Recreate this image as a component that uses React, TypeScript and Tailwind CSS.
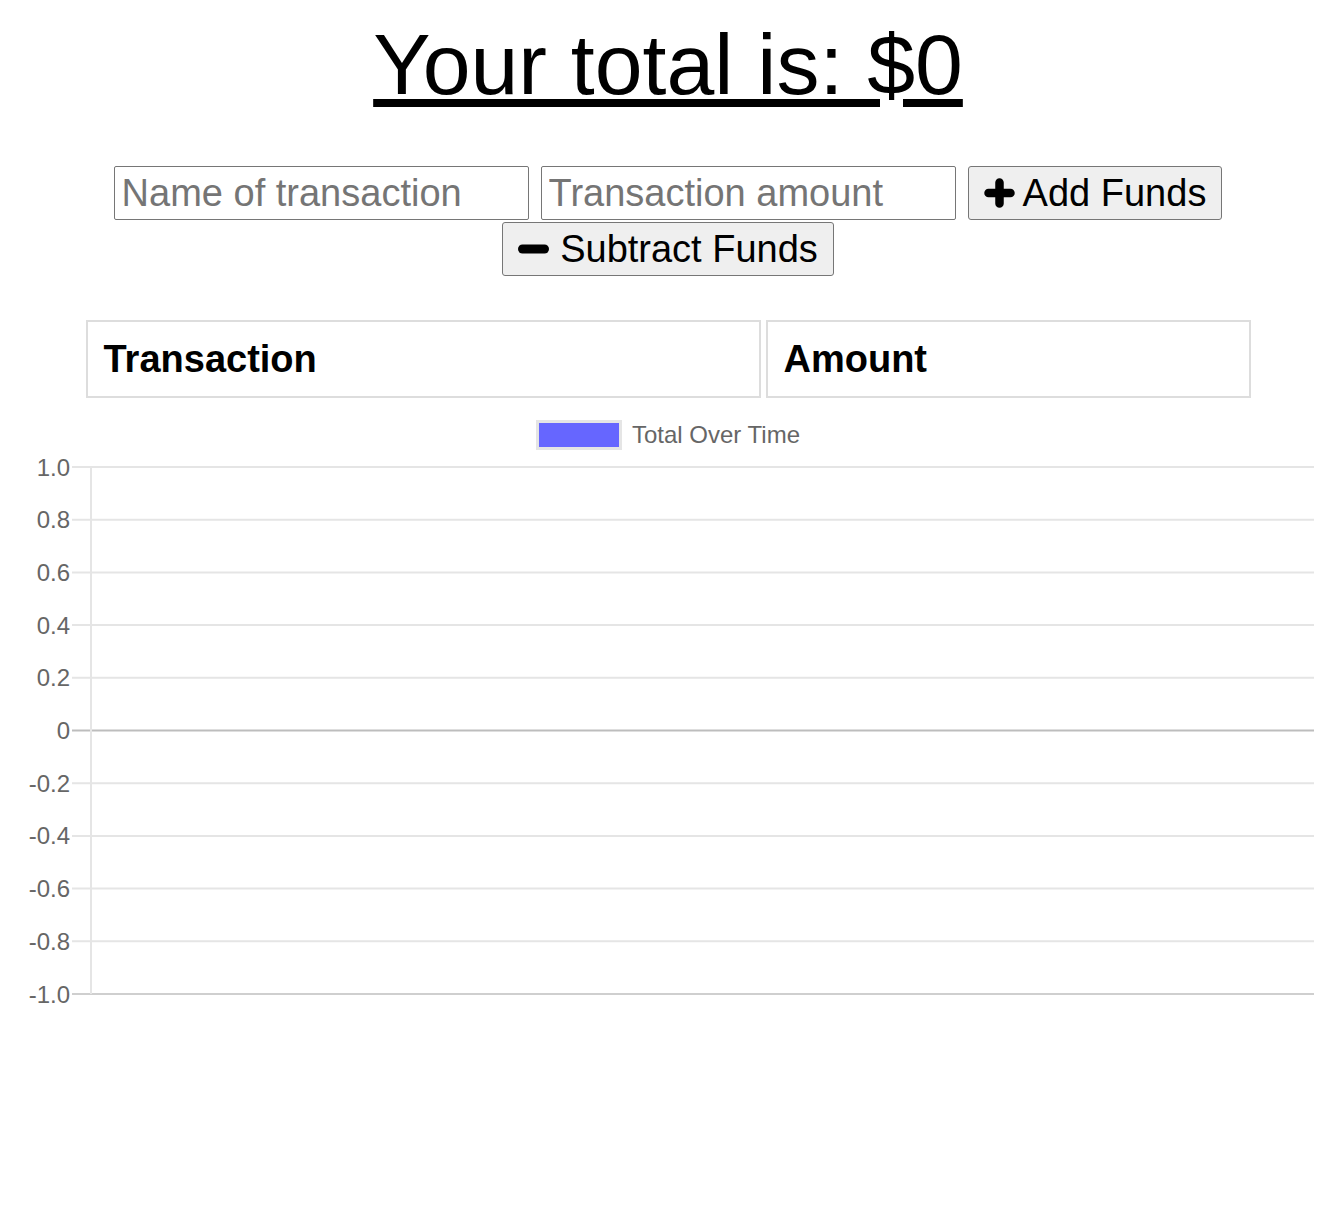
import React from "react";

const ticks = ["1.0", "0.8", "0.6", "0.4", "0.2", "0", "-0.2", "-0.4", "-0.6", "-0.8", "-1.0"];

function PlusIcon() {
  return (
    <svg width="31" height="30" viewBox="0 0 31 30" className="shrink-0">
      <path d="M15.5 4.5 V25.5 M4.5 15 H26.5" stroke="#000" strokeWidth="8.5" strokeLinecap="round" fill="none" />
    </svg>
  );
}

function MinusIcon() {
  return (
    <svg width="31" height="12" viewBox="0 0 31 12" className="shrink-0">
      <path d="M4.5 6 H26.5" stroke="#000" strokeWidth="9" strokeLinecap="round" fill="none" />
    </svg>
  );
}

function Chart() {
  const top = 17;
  const step = 52.7;
  const left = 91;
  const right = 1314;
  return (
    <svg width="1336" height="560" viewBox="0 0 1336 560" className="block">
      {ticks.map((t, i) => {
        const y = top + i * step;
        const isZero = t === "0";
        const isBottom = i === ticks.length - 1;
        const color = isZero ? "#bdbdbd" : isBottom ? "#cfcfcf" : "#e5e5e5";
        return (
          <g key={t}>
            <line x1={72} x2={right} y1={y} y2={y} stroke={color} strokeWidth={2} />
            <text
              x={70}
              y={y}
              textAnchor="end"
              dominantBaseline="central"
              fill="#666"
              fontSize="24"
              fontFamily="'Liberation Sans', Arial, sans-serif"
            >
              {t}
            </text>
          </g>
        );
      })}
      <line x1={left} x2={left} y1={top} y2={top + 10 * step} stroke="#e5e5e5" strokeWidth={2} />
    </svg>
  );
}

export default function App() {
  return (
    <div className="w-[1336px] min-h-[1224px] bg-white text-black font-['Liberation_Sans',Arial,sans-serif]">
      <h1 className="pt-[15px] text-center text-[86px] leading-[98px] font-normal underline">
        Your total is: $0
      </h1>

      <div className="mt-[53px] flex flex-wrap justify-center gap-y-[2px]">
        <input
          type="text"
          placeholder="Name of transaction"
          className="w-[415px] h-[54px] border border-[#767676] rounded-[2px] px-[7px] text-[38px] placeholder:text-[#757575] outline-none"
        />
        <input
          type="number"
          placeholder="Transaction amount"
          className="ml-[12px] w-[415px] h-[54px] border border-[#767676] rounded-[2px] px-[7px] text-[38px] placeholder:text-[#757575] outline-none"
        />
        <button className="ml-[12px] h-[54px] flex items-center gap-[8px] bg-[#efefef] border border-[#767676] rounded-[3px] pl-[15px] pr-[15px] text-[38px] leading-none">
          <PlusIcon />
          <span>Add Funds</span>
        </button>
        <button className="h-[54px] flex items-center gap-[11px] bg-[#efefef] border border-[#767676] rounded-[3px] pl-[15px] pr-[15px] text-[38px] leading-none">
          <MinusIcon />
          <span>Subtract Funds</span>
        </button>
      </div>

      <div className="mt-[44px] flex justify-center gap-[5px]">
        <div className="w-[675px] border-2 border-[#dddddd] px-[16px] py-[15px] text-[38px] font-bold leading-[44px]">
          Transaction
        </div>
        <div className="w-[485px] border-2 border-[#dddddd] px-[16px] py-[15px] text-[38px] font-bold leading-[44px]">
          Amount
        </div>
      </div>

      <div className="mt-[22px] flex justify-center items-center gap-[10px]">
        <div className="w-[86px] h-[30px] border-[3px] border-[#e5e5e5] bg-[#6666ff]"></div>
        <span className="text-[24px] text-[#666666] leading-[30px]">Total Over Time</span>
      </div>

      <Chart />
    </div>
  );
}
